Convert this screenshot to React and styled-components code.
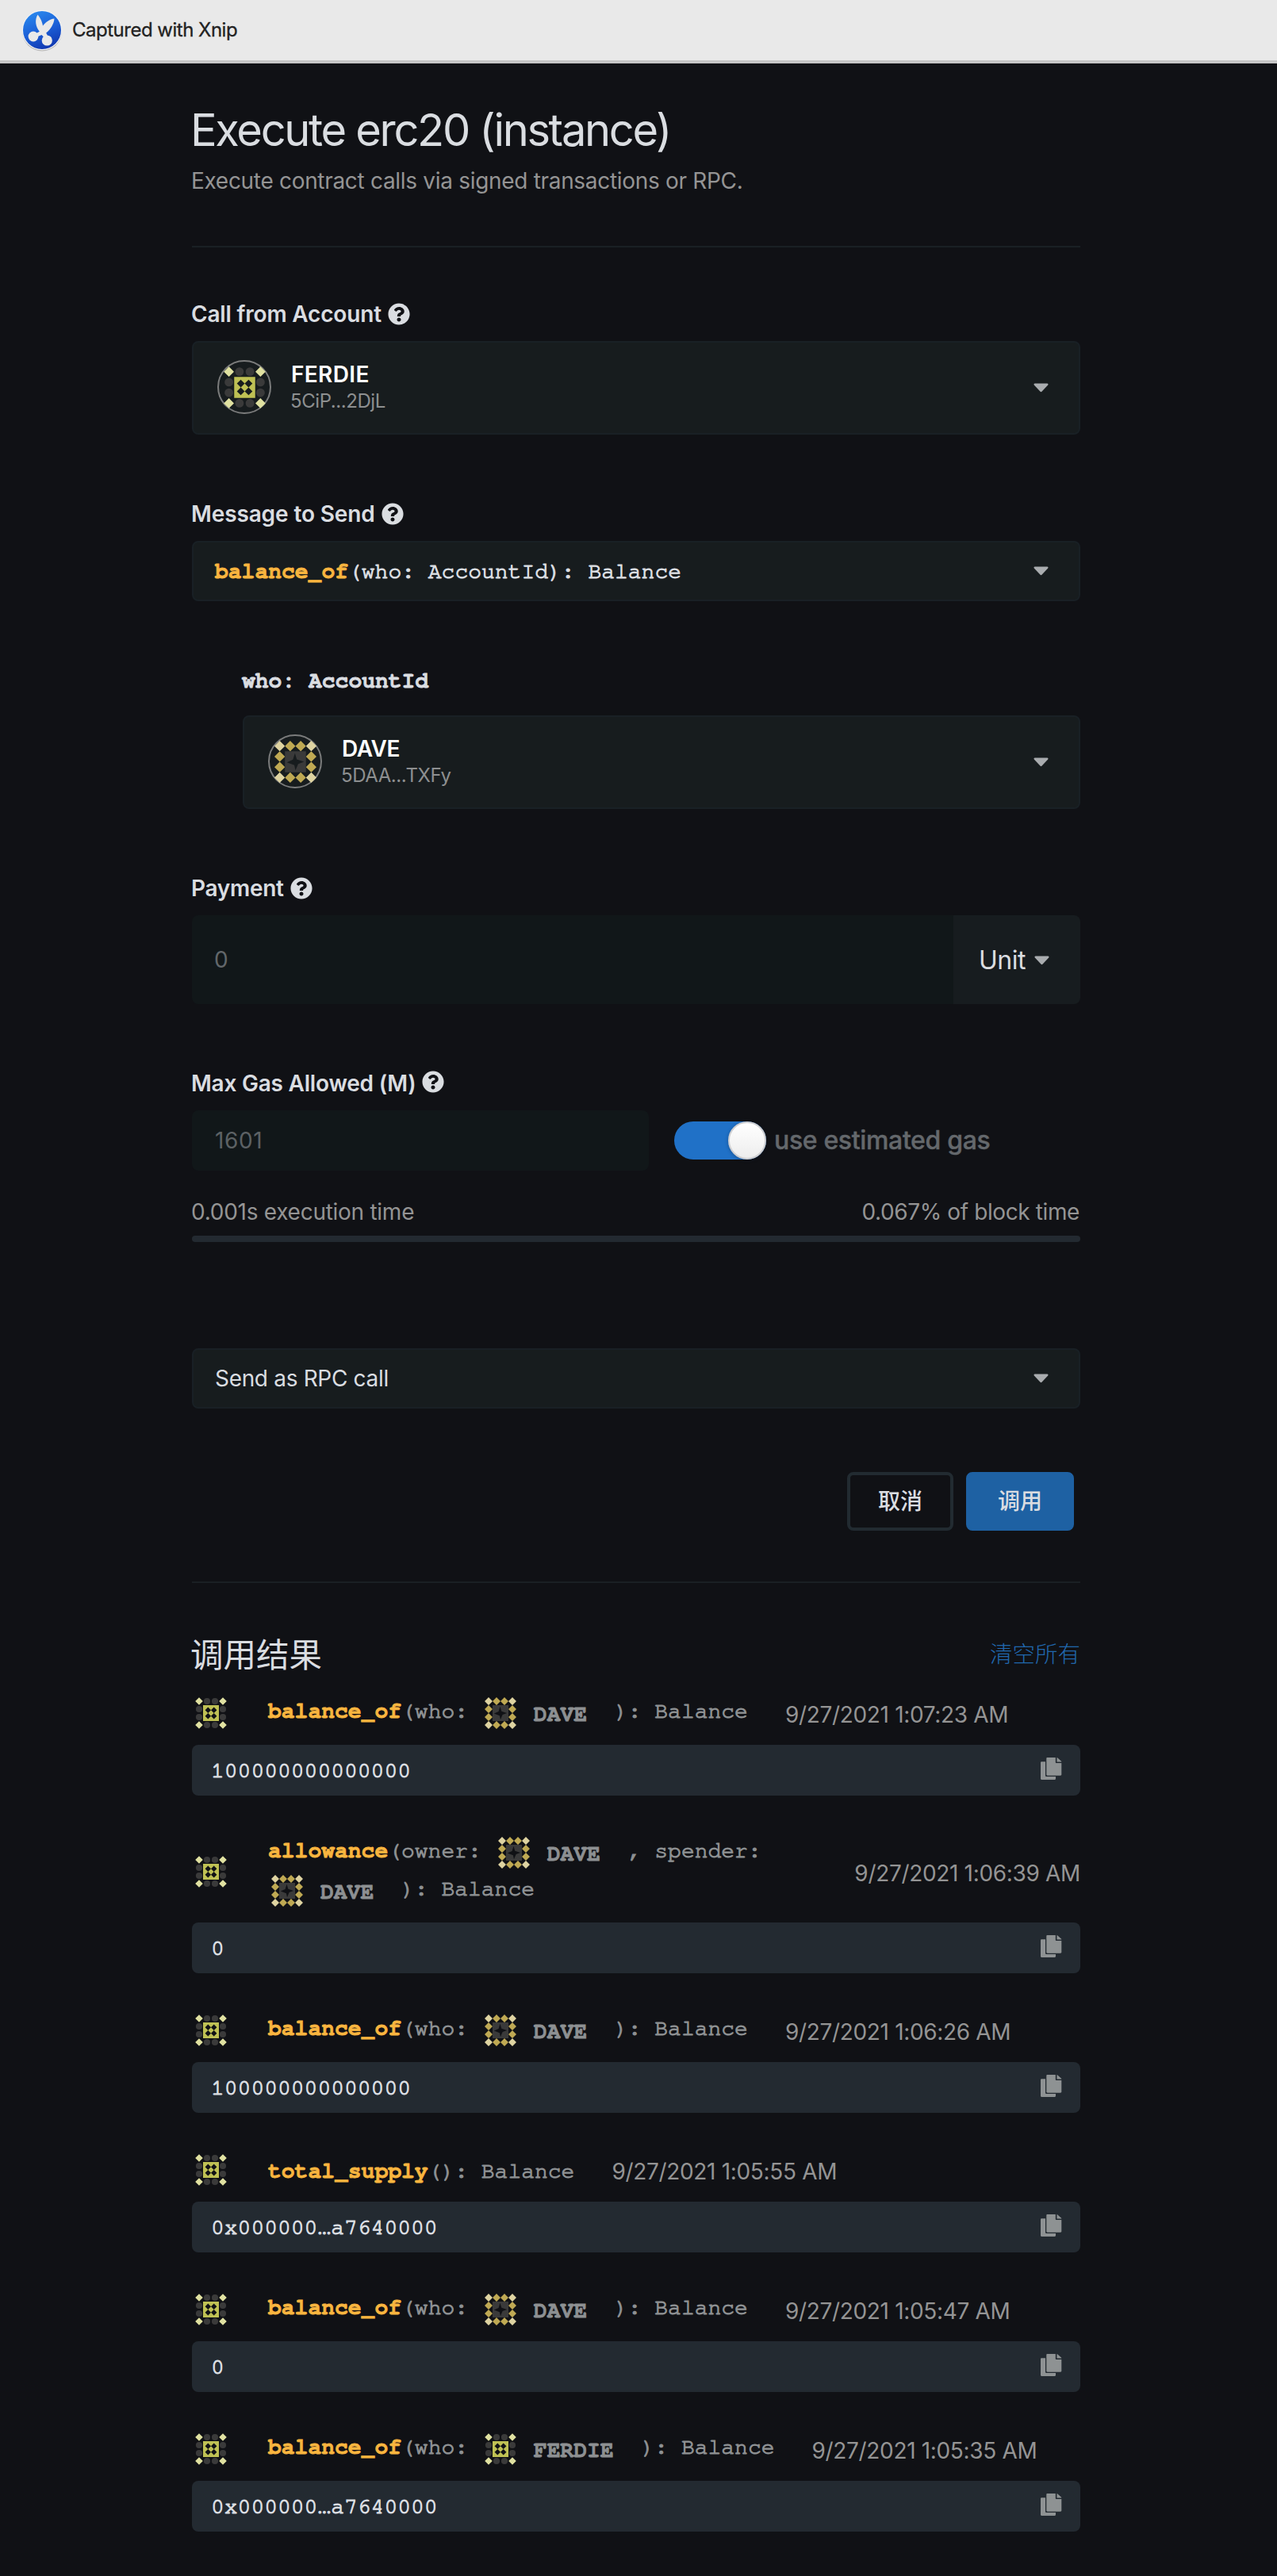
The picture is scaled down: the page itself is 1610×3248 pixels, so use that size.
import React from "react";
import styled, { createGlobalStyle, css } from "styled-components";

const color = {
  page: "#101115",
  field: "#171c1e",
  fieldBorder: "#192025",
  input: "#111719",
  line: "#1a2024",
  block: "#232a31",
  text: "#dadde1",
  muted: "#949494",
  code: "#8d9092",
  accent: "#f9b53f",
  blue: "#1e61a3",
};

const GlobalStyle = createGlobalStyle`
  * { box-sizing: border-box; }
  body {
    margin: 0;
    background: ${color.page};
    color: ${color.text};
    font-family: Inter, "Noto Sans CJK SC", sans-serif;
    font-size: 28px;
    line-height: 36px;
    -webkit-font-smoothing: antialiased;
  }
`;

const mono = css`
  font-family: FreeMono, "Liberation Mono", monospace;
  font-size: 28px;
  letter-spacing: 0;
  -webkit-text-stroke: 1.1px currentColor;
`;

const monoBold = css`
  font-weight: 700;
  -webkit-text-stroke: 0.8px currentColor;
`;

const Screen = styled.div`
  min-height: 3248px;
  background: ${color.page};
`;

const CaptureBar = styled.div`
  display: flex;
  align-items: center;
  height: 80px;
  padding-left: 23px;
  gap: 8px;
  background: #e9e9e9;
  border-bottom: 4px solid #c6c6c6;
  color: #222;
  font-size: 24px;
  letter-spacing: -0.5px;
  -webkit-text-stroke: 0.3px currentColor;
`;

const LogoSlot = styled.div`
  display: flex;
  width: 60px;
  flex: none;
`;

const Page = styled.main`
  width: 1120px;
  margin-left: 242px;
  padding-top: 52px;
`;

const Title = styled.h1`
  margin: 0 0 14px -2px;
  font-size: 56px;
  font-weight: 400;
  line-height: 64px;
  letter-spacing: -2.33px;
`;

const Intro = styled.p`
  margin: 0 0 64px -1px;
  color: ${color.muted};
  letter-spacing: -0.31px;
`;

const Rule = styled.hr`
  height: 2px;
  margin: 0;
  border: 0;
  background: ${color.line};
`;

const Field = styled.section`
  margin-top: ${(p) => p.$top}px;
  padding-left: ${(p) => p.$indent || 0}px;
`;

const Label = styled.div`
  display: flex;
  align-items: center;
  gap: 8px;
  height: 36px;
  margin: 0 0 16px -1px;
  font-weight: 600;
`;

const LabelText = styled.span`
  letter-spacing: ${(p) => p.$tracking}px;
`;

const HelpSvg = styled.svg`
  display: block;
  width: 28px;
  height: 28px;
  margin-bottom: ${(p) => p.$lift || 0}px;
`;

const ArgLabel = styled.div`
  ${mono}
  ${monoBold}
  height: 36px;
  margin: 0 0 25px -1px;
`;

const Select = styled.div`
  display: flex;
  align-items: center;
  height: ${(p) => (p.$tall ? 118 : 76)}px;
  padding: 0 38px 0 ${(p) => (p.$tall ? 30 : 27)}px;
  border: 2px solid ${color.fieldBorder};
  border-radius: 8px;
  background: ${color.field};
`;

const SelectedText = styled.div`
  flex: 1;
  letter-spacing: -0.32px;
`;

const CaretSvg = styled.svg`
  display: block;
  width: 19px;
  height: 12px;
  flex: none;
`;

const Avatar = styled.div`
  display: flex;
  align-items: center;
  justify-content: center;
  width: 68px;
  height: 68px;
  margin: 0 24px 2px 0;
  border: 2px solid #7b7c7c;
  border-radius: 50%;
`;

const Person = styled.div`
  display: flex;
  flex: 1;
  flex-direction: column;
  padding-bottom: 2px;
`;

const PersonName = styled.div`
  padding-left: 1px;
  color: #fff;
  font-weight: 600;
  line-height: 34px;
  letter-spacing: ${(p) => p.$tracking}px;
`;

const PersonAddress = styled.div`
  color: #8d8f90;
  font-size: 24px;
  line-height: 33px;
  letter-spacing: -0.43px;
`;

const Signature = styled.div`
  ${mono}
  flex: 1;
  padding-top: 2px;
  color: ${color.text};
`;

const FnName = styled.b`
  ${monoBold}
  color: ${color.accent};
`;

const AmountRow = styled.div`
  display: flex;
  height: 112px;
  border-radius: 8px;
  overflow: hidden;
`;

const AmountValue = styled.div`
  display: flex;
  flex: 1;
  align-items: center;
  padding-left: 28px;
  background: ${color.input};
  color: #62676a;
`;

const UnitButton = styled.div`
  display: flex;
  align-items: center;
  gap: 11px;
  width: 160px;
  padding: 1px 0 0 32px;
  background: #171c1f;
  font-size: 32px;
  letter-spacing: -0.5px;
`;

const GasRow = styled.div`
  display: flex;
  align-items: center;
`;

const GasInput = styled.div`
  display: flex;
  align-items: center;
  width: 576px;
  height: 76px;
  margin-right: 32px;
  padding-left: 29px;
  border-radius: 8px;
  background: ${color.input};
  color: #5c6164;
  letter-spacing: 0.6px;
`;

const Toggle = styled.div`
  display: flex;
  justify-content: flex-end;
  width: 116px;
  height: 48px;
  border-radius: 24px;
  background: #2071c7;
`;

const Knob = styled.div`
  width: 48px;
  height: 48px;
  border: 2px solid #cfcfd1;
  border-radius: 50%;
  background: linear-gradient(#ffffff, #ededed);
  box-shadow: 0 1px 4px rgba(10, 20, 40, 0.35);
`;

const ToggleText = styled.span`
  margin-left: 10px;
  color: #64686c;
  font-size: 32px;
  font-weight: 500;
  letter-spacing: -0.35px;
  -webkit-text-stroke: 0.4px currentColor;
`;

const GasStats = styled.div`
  display: flex;
  justify-content: space-between;
  margin: 34px 0 12px -1px;
  padding-right: 1px;
  color: ${color.muted};
`;

const Stat = styled.span`
  letter-spacing: ${(p) => p.$tracking}px;
`;

const Meter = styled.div`
  height: 8px;
  border-radius: 4px;
  background: ${color.block};
`;

const Actions = styled.div`
  display: flex;
  justify-content: flex-end;
  gap: 16px;
  margin: 80px 8px 64px 0;
`;

const Button = styled.button`
  width: ${(p) => (p.$primary ? 136 : 134)}px;
  height: 74px;
  padding: 0 0 4px;
  border: 4px solid ${(p) => (p.$primary ? color.blue : "#222b31")};
  border-radius: 8px;
  background: ${(p) => (p.$primary ? color.blue : "transparent")};
  color: ${color.text};
  font: 500 28px "Noto Sans CJK SC", sans-serif;
`;

const ResultsHead = styled.div`
  display: flex;
  align-items: center;
  justify-content: space-between;
  height: 60px;
  margin: 58px 0 22px -2px;
  font-family: "Noto Sans CJK SC", sans-serif;
`;

const ResultsTitle = styled.h2`
  margin: 0;
  font-size: 41.5px;
  font-weight: 400;
  line-height: 56px;
`;

const ClearAll = styled.a`
  color: #2067ae;
  font-weight: 300;
  font-size: 28.5px;
`;

const ResultList = styled.div`
  display: flex;
  flex-direction: column;
  gap: 48px;
`;

const Result = styled.article`
  display: flex;
  flex-direction: column;
  gap: 16px;
`;

const ResultHeader = styled.header`
  display: flex;
  align-items: center;
  padding-left: 4px;
`;

const CallText = styled.div`
  ${mono}
  align-self: flex-start;
  max-width: 691px;
  margin: ${(p) => (p.$plain ? 2 : -2)}px 47px ${(p) => (p.$plain ? -2 : 2)}px 52px;
  color: ${color.code};
  line-height: 48px;
  white-space: pre-wrap;
`;

const Chip = styled.span`
  ${monoBold}
  display: inline-flex;
  align-items: center;
  height: 48px;
  padding-top: 4px;
  margin: 0 18px 0 4px;
  vertical-align: top;
`;

const ChipName = styled.span`
  margin: 3px 0 0 22px;
`;

const Timestamp = styled.time`
  flex: none;
  margin: 4px 0 0 ${(p) => (p.$end ? "auto" : "0")};
  color: ${color.muted};
  letter-spacing: -0.33px;
`;

const Output = styled.div`
  ${mono}
  display: flex;
  align-items: center;
  justify-content: space-between;
  height: 64px;
  padding: 0 23px 0 24px;
  border-radius: 8px;
  background: ${color.block};
  color: ${color.text};
`;

const OutputValue = styled.span`
  padding-top: 2px;
`;

const CopySvg = styled.svg`
  display: block;
  width: 27px;
  height: 28px;
  margin-bottom: 4px;
`;

const HelpIcon = ({ lift }) => (
  <HelpSvg $lift={lift} viewBox="0 0 512 512" fill={color.text}>
    <path d="M504 256c0 136.997-111.043 248-248 248S8 392.997 8 256C8 119.083 119.043 8 256 8s248 111.083 248 248zM262.655 90c-54.497 0-89.255 22.957-116.549 63.758-3.536 5.286-2.353 12.415 2.715 16.258l34.699 26.31c5.205 3.947 12.621 3.008 16.665-2.122 17.864-22.658 30.113-35.797 57.303-35.797 20.429 0 45.698 13.148 45.698 32.958 0 14.976-12.363 22.667-32.534 33.976C247.128 238.528 216 254.941 216 296v4c0 6.627 5.373 12 12 12h56c6.627 0 12-5.373 12-12v-1.333c0-28.462 83.186-29.647 83.186-106.667 0-58.002-60.165-102-116.531-102zM256 338c-25.365 0-46 20.635-46 46 0 25.364 20.635 46 46 46s46-20.636 46-46c0-25.365-20.635-46-46-46z" />
  </HelpSvg>
);

const Caret = () => (
  <CaretSvg viewBox="0 0 19 12">
    <path d="M1.6.5h15.8c1 0 1.5 1.1.8 1.9L10.4 10.8c-.5.6-1.3.6-1.8 0L.8 2.4C.1 1.6.6.5 1.600.5z" fill="#a9acaf" />
  </CaretSvg>
);

const CopyIcon = () => (
  <CopySvg viewBox="0 0 27 28" fill="#8e9293">
    <path d="M1.2 5.3H6v17.4c0 .8.6 1.4 1.4 1.4H19v2.7c0 .7-.5 1.2-1.200 1.2H1.200C.5 28 0 27.5 0 26.8V6.5c0-.7.5-1.2 1.2-1.2z" />
    <path d="M8.5 0h10.3v5.9c0 .7.5 1.2 1.2 1.2h6.3v14.4c0 .7-.5 1.200-1.2 1.200H8.5c-.7 0-1.2-.5-1.2-1.200V1.2C7.3.5 7.8 0 8.5 0z" />
    <path d="M20.5.1c.4 0 .7.2.9.4l4.500 4.100c.2.2.4.5.4.8h-5.8z" />
  </CopySvg>
);

const diamond = (x, y, r) => `M${x} ${y - r}L${x + r} ${y}L${x} ${y + r}L${x - r} ${y}z`;
const corners = [[5, 5], [35, 5], [5, 35], [35, 35]];
const sides = [[15, 5], [25, 5], [15, 35], [25, 35], [5, 15], [5, 25], [35, 15], [35, 25]];
const holes = [[16.3, 16.3], [23.7, 16.3], [16.3, 23.7], [23.7, 23.7]];

const Identicon = ({ who, size = 40 }) =>
  who === "FERDIE" ? (
    <svg width={size} height={size} viewBox="0 0 40 40">
      {sides.map(([x, y]) => (
        <circle key={`${x}-${y}`} cx={x} cy={y} r="4.1" fill="#3a3a3a" />
      ))}
      <path d={corners.map(([x, y]) => diamond(x, y, 4.8)).join("")} fill="#e0e1a1" />
      <path
        fillRule="evenodd"
        fill="#bfc154"
        d={"M10 10h20v20h-20z" + holes.map(([x, y]) => diamond(x, y, 3.7)).join("")}
      />
    </svg>
  ) : (
    <svg width={size} height={size} viewBox="0 0 40 40">
      <path d={sides.map(([x, y]) => diamond(x, y, 5)).join("")} fill="#bfa953" />
      <path d={corners.map(([x, y]) => diamond(x, y, 5)).join("")} fill="#ded3a1" />
      <path
        fillRule="evenodd"
        fill="#3a3a3a"
        d="M10 10h20v20h-20zM19.5 11.8L21.3 17.7L28.2 20L22.6 22L20 28.2L18.9 23.2L11.8 20.5L17.6 18z"
      />
    </svg>
  );

const XnipLogo = () => (
  <svg width="60" height="64" viewBox="0 0 60 64">
    <defs>
      <linearGradient id="disc" x1="0.2" y1="0" x2="0.6" y2="1">
        <stop offset="0" stopColor="#2b8bef" />
        <stop offset="0.55" stopColor="#1b5ed6" />
        <stop offset="1" stopColor="#1138b0" />
      </linearGradient>
    </defs>
    <circle cx="30" cy="33.5" r="25" fill="#b9b9ba" />
    <circle cx="30" cy="32" r="25.2" fill="#f3f3f3" />
    <circle cx="30" cy="32" r="24" fill="url(#disc)" />
    <g fill="#e9e9e9">
      <path d="M24.500 12.500C26.500 15 30 20 31 26.500C34 22.500 39.500 18 45.500 17.500C45 24 41 31 35.200 35.500L37.200 39.500L32.500 41L29.500 38L23.500 40.500L22 36.500L26.800 33.800C21.800 27.500 20.500 19 24.500 12.500z" />
      <circle cx="19" cy="40" r="6.4" />
      <circle cx="36.3" cy="45" r="6.6" />
    </g>
  </svg>
);

const AccountSelect = ({ who, address, tracking }) => (
  <Select $tall>
    <Avatar>
      <Identicon who={who} size={53} />
    </Avatar>
    <Person>
      <PersonName $tracking={tracking}>{who}</PersonName>
      <PersonAddress>{address}</PersonAddress>
    </Person>
    <Caret />
  </Select>
);

const results = [
  { fn: "balance_of", args: [["who", "DAVE"]], time: "9/27/2021 1:07:23 AM", out: "100000000000000" },
  { fn: "allowance", args: [["owner", "DAVE"], ["spender", "DAVE"]], time: "9/27/2021 1:06:39 AM", out: "0" },
  { fn: "balance_of", args: [["who", "DAVE"]], time: "9/27/2021 1:06:26 AM", out: "100000000000000" },
  { fn: "total_supply", args: [], time: "9/27/2021 1:05:55 AM", out: "0x000000…a7640000" },
  { fn: "balance_of", args: [["who", "DAVE"]], time: "9/27/2021 1:05:47 AM", out: "0" },
  { fn: "balance_of", args: [["who", "FERDIE"]], time: "9/27/2021 1:05:35 AM", out: "0x000000…a7640000" },
];

const ResultItem = ({ fn, args, time, out }) => (
  <Result>
    <ResultHeader>
      <Identicon who="FERDIE" />
      <CallText $plain={args.length === 0}>
        <FnName>{fn}</FnName>(
        {args.map(([name, who], i) => (
          <React.Fragment key={name}>
            {i > 0 && ", "}
            {name}:{" "}
            <Chip>
              <Identicon who={who} />
              <ChipName>{who}</ChipName>
            </Chip>
            {i === args.length - 1 ? "\u00a0" : "\u2060\u00a0\u2060"}
          </React.Fragment>
        ))}
        ): Balance
      </CallText>
      <Timestamp $end={args.length > 1}>{time}</Timestamp>
    </ResultHeader>
    <Output>
      <OutputValue>{out}</OutputValue>
      <CopyIcon />
    </Output>
  </Result>
);

export default function App() {
  return (
    <Screen>
      <GlobalStyle />
      <CaptureBar>
        <LogoSlot>
          <XnipLogo />
        </LogoSlot>
        <span>Captured with Xnip</span>
      </CaptureBar>
      <Page>
        <Title>Execute erc20 (instance)</Title>
        <Intro>Execute contract calls via signed transactions or RPC.</Intro>
        <Rule />
        <Field $top={66}>
          <Label>
            <LabelText $tracking={-0.18}>Call from Account</LabelText>
            <HelpIcon />
          </Label>
          <AccountSelect who="FERDIE" address="5CiP...2DjL" tracking={0.35} />
        </Field>
        <Field $top={82}>
          <Label>
            <LabelText $tracking={-0.12}>Message to Send</LabelText>
            <HelpIcon />
          </Label>
          <Select>
            <Signature>
              <FnName>balance_of</FnName>(who: AccountId): Balance
            </Signature>
            <Caret />
          </Select>
        </Field>
        <Field $top={83} $indent={64}>
          <ArgLabel>who: AccountId</ArgLabel>
          <AccountSelect who="DAVE" address="5DAA...TXFy" tracking={-0.4} />
        </Field>
        <Field $top={82}>
          <Label>
            <LabelText $tracking={-0.28}>Payment</LabelText>
            <HelpIcon />
          </Label>
          <AmountRow>
            <AmountValue>0</AmountValue>
            <UnitButton>
              <span>Unit</span>
              <Caret />
            </UnitButton>
          </AmountRow>
        </Field>
        <Field $top={82}>
          <Label>
            <LabelText $tracking={-0.22}>Max Gas Allowed (M)</LabelText>
            <HelpIcon lift={4} />
          </Label>
          <GasRow>
            <GasInput>1601</GasInput>
            <Toggle>
              <Knob />
            </Toggle>
            <ToggleText>use estimated gas</ToggleText>
          </GasRow>
          <GasStats>
            <Stat $tracking={-0.27}>0.001s execution time</Stat>
            <Stat $tracking={-0.39}>0.067% of block time</Stat>
          </GasStats>
          <Meter />
        </Field>
        <Field $top={134}>
          <Select>
            <SelectedText>Send as RPC call</SelectedText>
            <Caret />
          </Select>
        </Field>
        <Actions>
          <Button>取消</Button>
          <Button $primary>调用</Button>
        </Actions>
        <Rule />
        <ResultsHead>
          <ResultsTitle>调用结果</ResultsTitle>
          <ClearAll>清空所有</ClearAll>
        </ResultsHead>
        <ResultList>
          {results.map((r) => (
            <ResultItem key={r.time} {...r} />
          ))}
        </ResultList>
      </Page>
    </Screen>
  );
}
